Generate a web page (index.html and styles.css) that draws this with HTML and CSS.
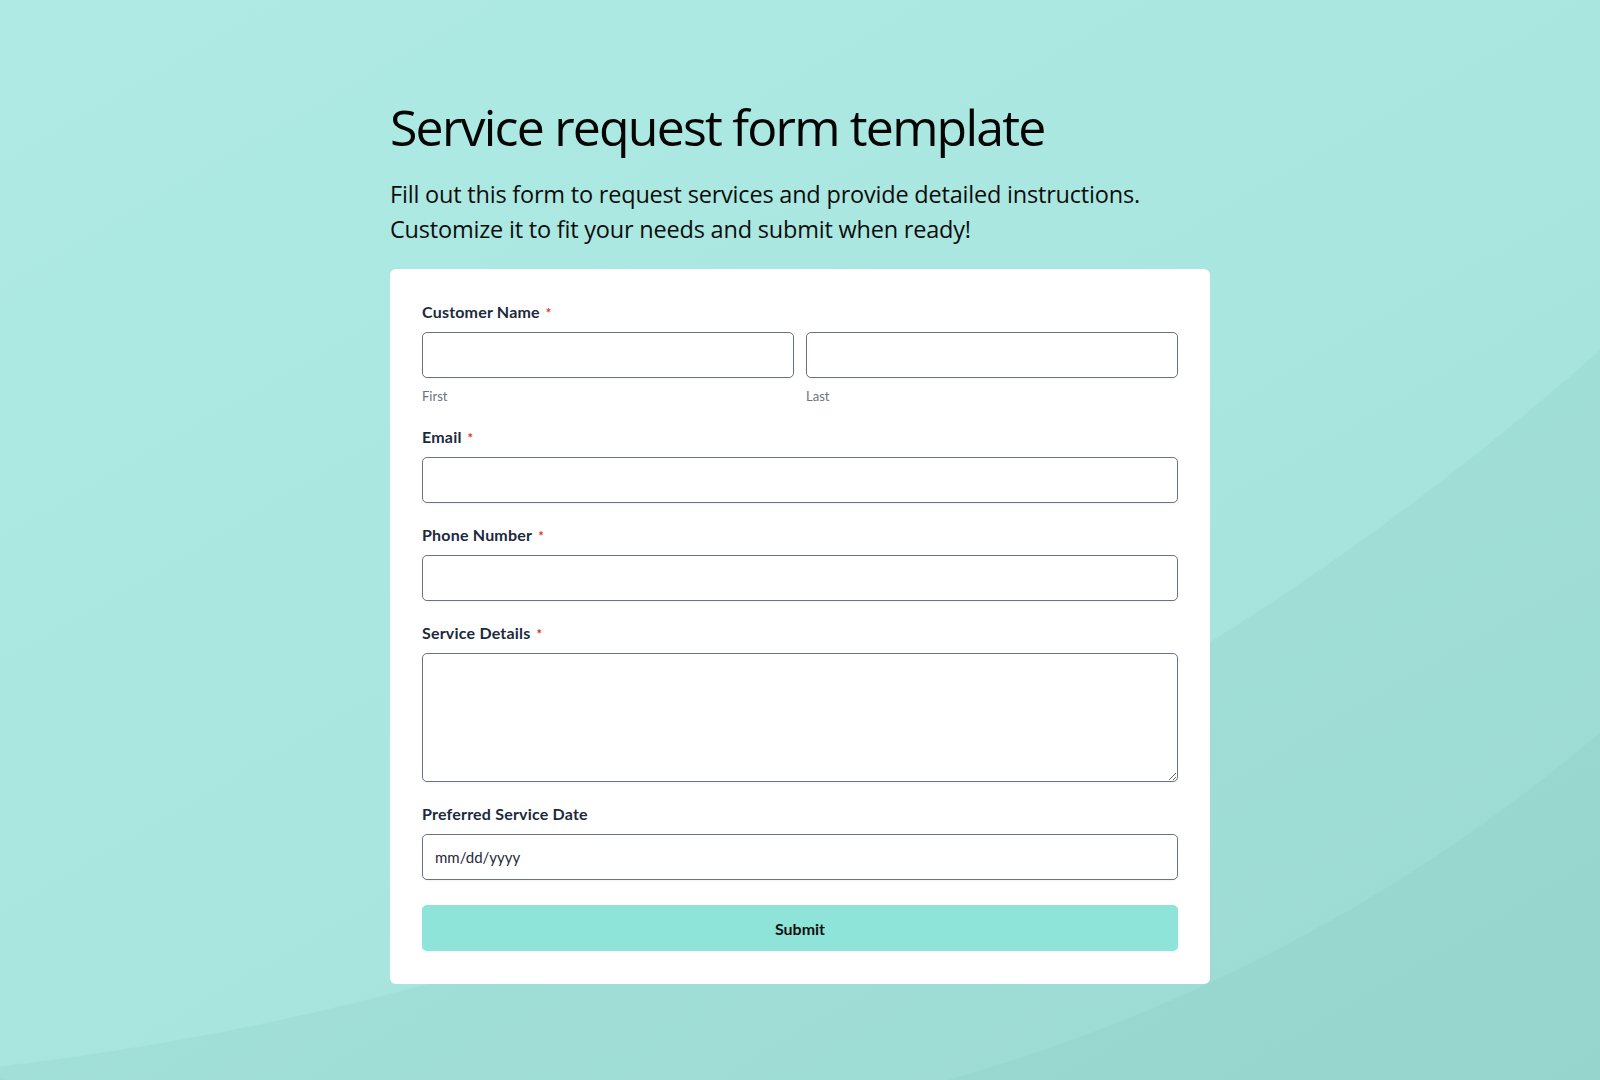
FILE: index.html
```html
<!DOCTYPE html>
<html lang="en">
<head>
<meta charset="utf-8">
<title>Service request form template</title>
<link rel="stylesheet" href="styles.css">
</head>
<body>
<main class="page">
  <h1 class="title">Service request form template</h1>
  <p class="intro">Fill out this form to request services and provide detailed instructions.<br>Customize it to fit your needs and submit when ready!</p>
  <form class="card">
    <div class="field">
      <label class="label">Customer Name<span class="req">*</span></label>
      <div class="name-row">
        <div class="name-col">
          <input class="input" type="text">
          <span class="sublabel">First</span>
        </div>
        <div class="name-col">
          <input class="input" type="text">
          <span class="sublabel">Last</span>
        </div>
      </div>
    </div>
    <div class="field">
      <label class="label">Email<span class="req">*</span></label>
      <input class="input" type="email">
    </div>
    <div class="field">
      <label class="label">Phone Number<span class="req">*</span></label>
      <input class="input" type="tel">
    </div>
    <div class="field">
      <label class="label">Service Details<span class="req">*</span></label>
      <textarea class="input textarea"></textarea>
    </div>
    <div class="field">
      <label class="label">Preferred Service Date</label>
      <input class="input date" type="text" placeholder="mm/dd/yyyy">
    </div>
    <button class="submit" type="button">Submit</button>
  </form>
</main>
</body>
</html>
```

FILE: styles.css
```css
* {
  box-sizing: border-box;
}

html {
  background-color: #a8e6df;
}

body {
  margin: 0;
  min-height: 1080px;
  font-family: Lato, "Noto Sans", sans-serif;
  color: #1e293b;
  background:
    radial-gradient(circle 1733px at 478px -588px, rgba(0, 70, 60, 0) 1732px, rgba(0, 70, 60, 0.03) 1733.5px),
    radial-gradient(circle 2915px at -336px -1829px, rgba(0, 70, 60, 0) 2914px, rgba(0, 70, 60, 0.04) 2915.5px),
    linear-gradient(150deg, #afebe4 0%, #a8e6df 50%, #a1dfd9 100%);
  background-repeat: no-repeat;
  background-size: 1600px 1080px;
}

.page {
  width: 820px;
  margin: 0 auto;
  padding-top: 95px;
}

.title {
  margin: 0;
  font-family: "Open Sans", Lato, sans-serif;
  font-stretch: 88%;
  font-weight: 400;
  font-size: 50px;
  letter-spacing: -1.8px;
  line-height: 64px;
  color: #050505;
}

.intro {
  margin: 18px 0 0;
  font-family: "Open Sans", Lato, sans-serif;
  font-stretch: 90%;
  font-weight: 400;
  font-size: 23.5px;
  letter-spacing: -0.2px;
  line-height: 35px;
  color: #0d0d0d;
}

.card {
  margin-top: 22px;
  background: #ffffff;
  border-radius: 6px;
  padding: 33px 32px 33px;
  display: flex;
  flex-direction: column;
}

.field {
  display: flex;
  flex-direction: column;
  margin-bottom: 22px;
}

.label {
  display: block;
  font-size: 16px;
  line-height: 20px;
  font-weight: 700;
  letter-spacing: 0.2px;
  color: #1c2a3d;
  margin-bottom: 10px;
}

.req {
  color: #e0302a;
  font-size: 13px;
  line-height: 1;
  font-weight: 700;
  margin-left: 6px;
}

.name-row {
  display: flex;
  gap: 12px;
}

.name-col {
  flex: 1;
  display: flex;
  flex-direction: column;
}

.sublabel {
  margin-top: 10px;
  font-size: 13px;
  line-height: 17px;
  color: #6b7280;
}

.input {
  display: block;
  width: 100%;
  height: 46px;
  padding: 0 12px;
  border: 1px solid #6b7280;
  border-radius: 5px;
  background: #ffffff;
  font-family: Lato, "Noto Sans", sans-serif;
  font-size: 15px;
  color: #1e293b;
  box-shadow: 0 1px 2px rgba(0, 0, 0, 0.05);
  outline: none;
}

.textarea {
  height: 129px;
  padding: 10px 12px;
  resize: vertical;
}

.date::placeholder {
  color: #1e293b;
  opacity: 1;
}

.submit {
  margin-top: 3px;
  height: 46px;
  width: 100%;
  border: none;
  border-radius: 5px;
  background: #8ee4d8;
  font-family: Lato, "Noto Sans", sans-serif;
  font-size: 16px;
  font-weight: 700;
  color: #111111;
  box-shadow: 0 1px 2px rgba(0, 0, 0, 0.05);
  cursor: pointer;
}
```
